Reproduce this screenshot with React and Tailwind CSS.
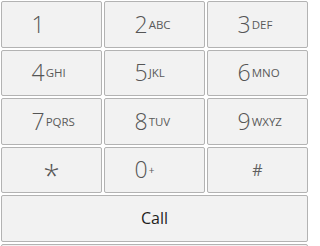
import React from "react";

const keys = [
  ["1", ""],
  ["2", "ABC"],
  ["3", "DEF"],
  ["4", "GHI"],
  ["5", "JKL"],
  ["6", "MNO"],
  ["7", "PQRS"],
  ["8", "TUV"],
  ["9", "WXYZ"],
];

const btn =
  "h-[46.5px] rounded-[2px] border border-[#b3b3b3] bg-[#f2f2f2] flex items-center justify-center";

function DigitKey({ d, l }) {
  return (
    <div className={btn}>
      <div className="w-[40px] flex items-center">
        <span className="text-[23px] leading-none font-light text-[#555555]">{d}</span>
        {l && (
          <span className="text-[11.5px] leading-none text-[#5a5a5a] ml-[1px]">{l}</span>
        )}
      </div>
    </div>
  );
}

export default function App() {
  return (
    <div
      className="w-[309px] h-[246px] overflow-hidden bg-white pt-[1px] px-[1px]"
      style={{ fontFamily: '"Open Sans", "Noto Sans", "Liberation Sans", sans-serif' }}
    >
      <div className="grid grid-cols-3 gap-x-[2px] gap-y-[2px] w-[307px]">
        {keys.map(([d, l]) => (
          <DigitKey key={d} d={d} l={l} />
        ))}
        <div className={btn}>
          <span className="text-[30px] leading-none font-light text-[#555555] translate-y-[5px]">*</span>
        </div>
        <div className={btn}>
          <div className="w-[40px] flex items-center">
            <span className="text-[23px] leading-none font-light text-[#555555]">0</span>
            <span className="text-[10px] leading-none text-[#5a5a5a] ml-[1px]">+</span>
          </div>
        </div>
        <div className={btn}>
          <span className="text-[16px] leading-none font-normal text-[#5f5f5f]">#</span>
        </div>
        <div className={`${btn} col-span-3`}>
          <span className="text-[16px] leading-none text-[#1e1e1e]">Call</span>
        </div>
        <div className={`${btn} col-span-3`} />
      </div>
    </div>
  );
}
